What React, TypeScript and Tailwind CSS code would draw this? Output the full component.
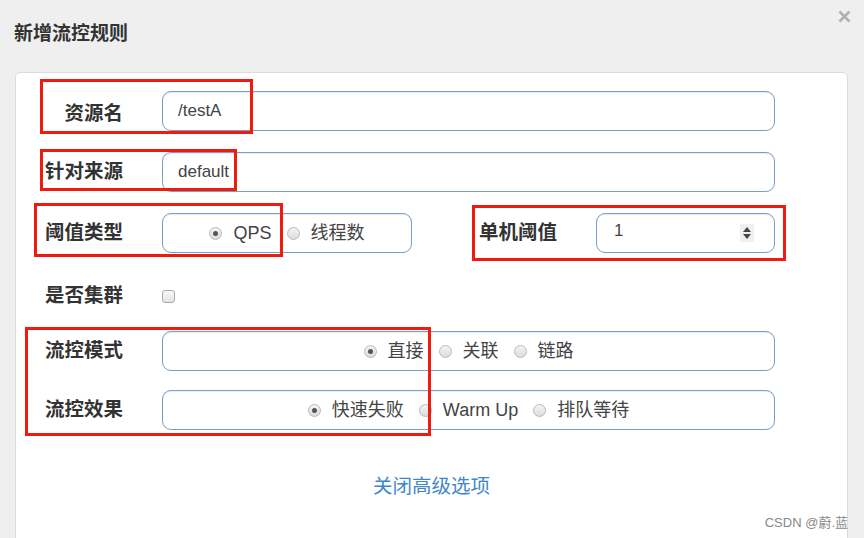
const FONT = { fontFamily: "'Liberation Sans', 'Noto Sans CJK SC', sans-serif" }

function Radio({ checked, label }: { checked?: boolean; label: string }) {
  return (
    <span className="flex items-center">
      <span className="mr-[11px] flex h-[13px] w-[13px] items-center justify-center rounded-full border border-[#b9b9b9] bg-gradient-to-b from-[#f4f4f4] to-[#dcdcdc]">
        {checked && <span className="h-[5px] w-[5px] rounded-full bg-[#555]" />}
      </span>
      <span>{label}</span>
    </span>
  )
}

function Label({ text, className = '' }: { text: string; className?: string }) {
  return (
    <div
      className={`shrink-0 text-right text-[19.5px] font-semibold text-[#333] ${className}`}
    >
      {text}
    </div>
  )
}

const box =
  'h-[40px] rounded-[9px] border border-[#7a9ec8] bg-white shadow-[inset_0_1px_1px_rgba(0,0,0,0.08)]'

export default function App() {
  return (
    <div
      className="relative h-[538px] w-[864px] overflow-hidden bg-[#efefef]"
      style={FONT}
    >
      <div className="flex h-[72px] items-start justify-between">
        <h1 className="pl-[14px] pt-[20px] text-[19px] font-bold text-[#333]">
          新增流控规则
        </h1>
        <svg
          width="13"
          height="13"
          viewBox="0 0 13 13"
          className="mr-[13px] mt-[10px]"
        >
          <path
            d="M1.5 1.5 L11.5 11.5 M11.5 1.5 L1.5 11.5"
            stroke="#b0b0b0"
            strokeWidth="2.6"
          />
        </svg>
      </div>

      <div className="relative ml-[15px] h-[500px] w-[833px] rounded-[5px] border border-[#dcdcdc] bg-white pt-[18px]">
        {/* 资源名 */}
        <div className="flex items-center">
          <Label text="资源名" className="w-[107px] pt-[5px]" />
          <div className={`ml-[39px] w-[613px] pl-[15px] text-[17px] leading-[38px] text-[#444] ${box}`}>
            /testA
          </div>
        </div>

        {/* 针对来源 */}
        <div className="mt-[21px] flex items-center">
          <Label text="针对来源" className="w-[107px]" />
          <div className={`ml-[39px] w-[613px] pl-[15px] text-[17px] leading-[38px] text-[#444] ${box}`}>
            default
          </div>
        </div>

        {/* 阈值类型 / 单机阈值 */}
        <div className="mt-[21px] flex items-center">
          <Label text="阈值类型" className="w-[107px]" />
          <div
            className={`ml-[39px] flex w-[250px] items-center justify-center gap-[15px] text-[18px] text-[#444] ${box}`}
          >
            <Radio checked label="QPS" />
            <Radio label="线程数" />
          </div>
          <Label text="单机阈值" className="ml-[65px] w-[80px]" />
          <div
            className={`ml-[39px] flex w-[179px] items-center justify-between pl-[17px] pr-[20px] text-[17px] text-[#444] ${box}`}
          >
            <span className="-mt-[4px]">1</span>
            <span className="flex h-[18px] w-[14px] flex-col items-center justify-center gap-[2px] bg-[#f0f0f0]">
              <svg width="8" height="5" viewBox="0 0 8 5">
                <path d="M4 0 L8 5 L0 5 Z" fill="#444" />
              </svg>
              <svg width="8" height="5" viewBox="0 0 8 5">
                <path d="M0 0 L8 0 L4 5 Z" fill="#444" />
              </svg>
            </span>
          </div>
        </div>

        {/* 是否集群 */}
        <div className="mt-[23px] flex h-[40px] items-center">
          <Label text="是否集群" className="w-[107px]" />
          <span className="ml-[39px] h-[13px] w-[13px] rounded-[3px] border border-[#aaa] bg-gradient-to-b from-[#fafafa] to-[#e2e2e2]" />
        </div>

        {/* 流控模式 */}
        <div className="mt-[15px] flex items-center">
          <Label text="流控模式" className="w-[107px]" />
          <div
            className={`ml-[39px] flex w-[613px] items-center justify-center gap-[15px] text-[18px] text-[#444] ${box}`}
          >
            <Radio checked label="直接" />
            <Radio label="关联" />
            <Radio label="链路" />
          </div>
        </div>

        {/* 流控效果 */}
        <div className="mt-[19px] flex items-center">
          <Label text="流控效果" className="w-[107px]" />
          <div
            className={`ml-[39px] flex w-[613px] items-center justify-center gap-[15px] text-[18px] text-[#444] ${box}`}
          >
            <Radio checked label="快速失败" />
            <Radio label="Warm Up" />
            <Radio label="排队等待" />
          </div>
        </div>

        <div className="mt-[42px] text-center text-[19.5px] text-[#3f87c8]">
          关闭高级选项
        </div>

        {/* annotation boxes */}
        <div className="absolute left-[24px] top-[6px] h-[55px] w-[213px] border-[3px] border-[#ee1b0e]" />
        <div className="absolute left-[24px] top-[76px] h-[42px] w-[197px] border-[3px] border-[#ee1b0e]" />
        <div className="absolute left-[18px] top-[130px] h-[54px] w-[249px] border-[3px] border-[#ee1b0e]" />
        <div className="absolute left-[456px] top-[132px] h-[56px] w-[314px] border-[3px] border-[#ee1b0e]" />
        <div className="absolute left-[9px] top-[254px] h-[109px] w-[406px] border-[3px] border-[#ee1b0e]" />
      </div>

      <div className="absolute bottom-[6px] right-[16px] text-[13px] text-[#888]">
        CSDN @蔚.蓝
      </div>
    </div>
  )
}
